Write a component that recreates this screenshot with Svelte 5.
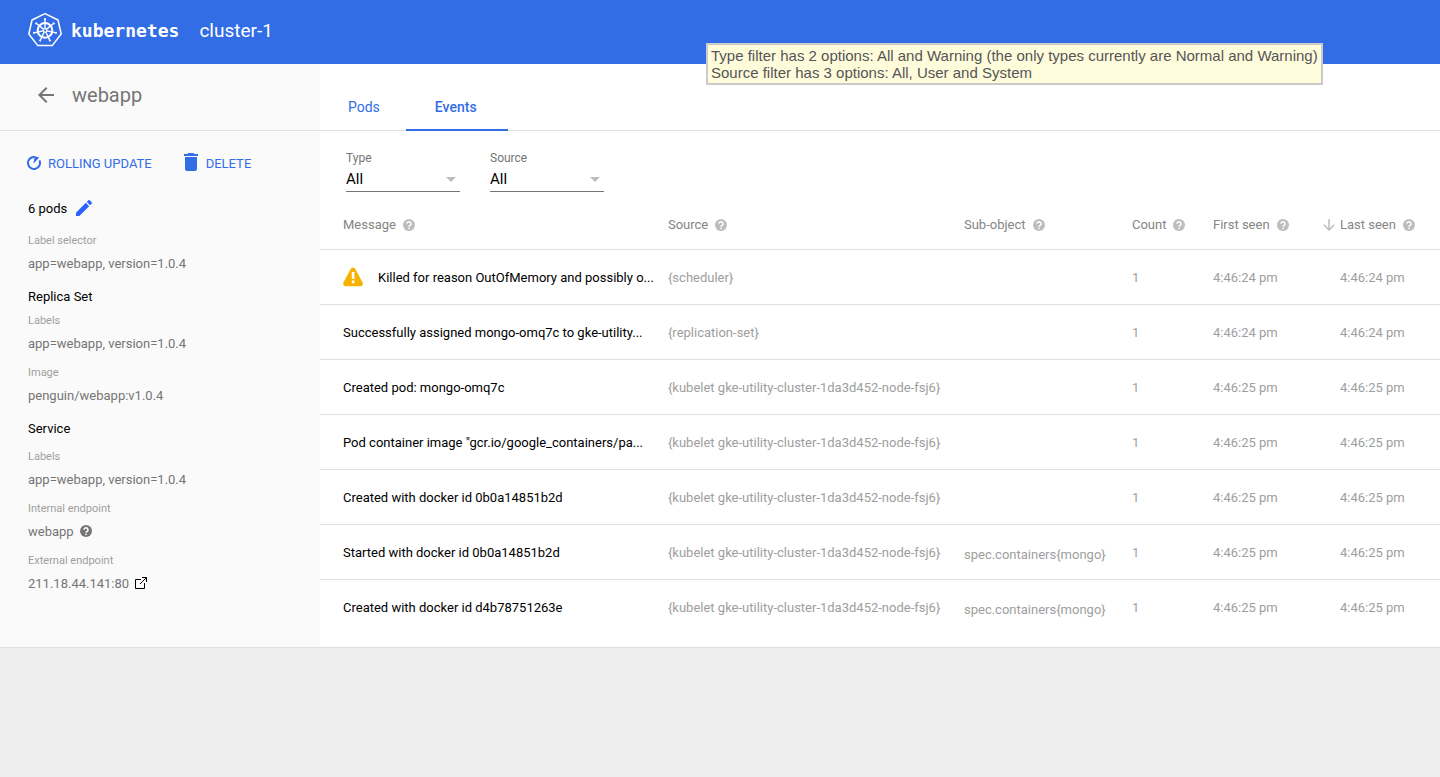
<script>
  const sections = [
    {
      title: '6 pods',
      lead: true,
      items: [{ label: 'Label selector', value: 'app=webapp, version=1.0.4' }]
    },
    {
      title: 'Replica Set',
      items: [
        { label: 'Labels', value: 'app=webapp, version=1.0.4' },
        { label: 'Image', value: 'penguin/webapp:v1.0.4' }
      ]
    },
    {
      title: 'Service',
      spaced: true,
      items: [
        { label: 'Labels', value: 'app=webapp, version=1.0.4' },
        { label: 'Internal endpoint', value: 'webapp', help: true },
        { label: 'External endpoint', value: '211.18.44.141:80', external: true }
      ]
    }
  ];

  const columns = [
    { key: 'message', title: 'Message' },
    { key: 'source', title: 'Source' },
    { key: 'object', title: 'Sub-object' },
    { key: 'count', title: 'Count' },
    { key: 'first', title: 'First seen' },
    { key: 'last', title: 'Last seen', sorted: true }
  ];

  const kubelet = '{kubelet gke-utility-cluster-1da3d452-node-fsj6}';
  const events = [
    { message: 'Killed for reason OutOfMemory and possibly o...', source: '{scheduler}', object: '', time: '4:46:24 pm', warning: true },
    { message: 'Successfully assigned mongo-omq7c to gke-utility...', source: '{replication-set}', object: '', time: '4:46:24 pm' },
    { message: 'Created pod: mongo-omq7c', source: kubelet, object: '', time: '4:46:25 pm' },
    { message: 'Pod container image "gcr.io/google_containers/pa...', source: kubelet, object: '', time: '4:46:25 pm' },
    { message: 'Created with docker id 0b0a14851b2d', source: kubelet, object: '', time: '4:46:25 pm' },
    { message: 'Started with docker id 0b0a14851b2d', source: kubelet, object: 'spec.containers{mongo}', time: '4:46:25 pm' },
    { message: 'Created with docker id d4b78751263e', source: kubelet, object: 'spec.containers{mongo}', time: '4:46:25 pm' }
  ];

  const spokes = [0, 1, 2, 3, 4, 5, 6].map((n) => (n * 360) / 7);
</script>

{#snippet helpIcon()}
  <svg class="help" viewBox="0 0 24 24" aria-hidden="true">
    <circle cx="12" cy="12" r="12" fill="currentColor" />
    <path d="M8 9.6a4 4 0 1 1 6.4 3.1c-1.4 1-2.3 1.5-2.3 3" fill="none" stroke="#fff" stroke-width="3" />
    <rect x="10.6" y="17.2" width="3" height="3" fill="#fff" />
  </svg>
{/snippet}

<header class="topbar">
  <svg class="logo" viewBox="0 0 36 36" aria-hidden="true" fill="none" stroke="#fff">
    <path d="M18 1.7 31 8l3.2 14-9 11.6H10.8L1.8 22 5 8z" stroke-width="1.5" stroke-linejoin="round" />
    <circle cx="18" cy="18.4" r="7.3" stroke-width="2" />
    <circle cx="18" cy="18.4" r="1.8" stroke-width="1.3" />
    {#each spokes as angle}
      <g transform="rotate({angle} 18 18.4)">
        <path d="M18 16.4V7" stroke-width="1.4" />
        <path d="M17 7h2" stroke-width="1.3" />
      </g>
    {/each}
  </svg>
  <span class="brand">kubernetes</span>
  <span class="cluster">cluster-1</span>
  <div class="note" role="note">
    Type filter has 2 options: All and Warning (the only types currently are Normal and Warning)<br />
    Source filter has 3 options: All, User and System
  </div>
</header>

<div class="page">
  <aside>
    <div class="title">
      <button class="back" aria-label="Back">
        <svg viewBox="0 0 24 24" fill="currentColor" aria-hidden="true"><path d="M20 11H7.83l5.59-5.59L12 4l-8 8 8 8 1.41-1.41L7.83 13H20v-2z" /></svg>
      </button>
      <h1>webapp</h1>
    </div>
    <div class="details">
      <div class="actions">
        <button class="action update">
          <svg width="14" height="14" viewBox="0 0 14 14" aria-hidden="true">
            <path d="M7.4 1A6 6 0 1 0 12.4 4.4" fill="none" stroke="currentColor" stroke-width="2" />
            <path d="M7 0 12.2 1.6 6.4 7.8 7.4 2z" fill="currentColor" />
          </svg>
          ROLLING UPDATE
        </button>
        <button class="action">
          <svg class="trash" width="14" height="18" viewBox="0 0 14 18" fill="currentColor" aria-hidden="true">
            <path d="M1 4h12v12a2 2 0 0 1-2 2H3a2 2 0 0 1-2-2zM14 1v2H0V1h3.5l1-1h5l1 1z" />
          </svg>
          DELETE
        </button>
      </div>
      {#each sections as section}
        <section class:lead={section.lead} class:spaced={section.spaced}>
          <h2>
            {section.title}
            {#if section.lead}
              <button class="edit" aria-label="Edit pod count">
                <svg viewBox="3 3 18 18" fill="currentColor" aria-hidden="true"><path d="M3 17.25V21h3.75L17.81 9.94l-3.75-3.75L3 17.25zM20.71 7.04a1 1 0 0 0 0-1.41l-2.34-2.34a1 1 0 0 0-1.41 0l-1.83 1.83 3.75 3.75 1.83-1.83z" /></svg>
              </button>
            {/if}
          </h2>
          <dl>
            {#each section.items as item}
              <dt>{item.label}</dt>
              <dd>
                {item.value}
                {#if item.help}{@render helpIcon()}{/if}
                {#if item.external}
                  <a class="open" href="#external" aria-label="Open external endpoint">
                    <svg viewBox="0 0 12 12" fill="none" stroke="currentColor" aria-hidden="true">
                      <path d="M6 2.5H.5v9h9V6" />
                      <path d="M7 .5h4.5V5M11.5.5 5 7" />
                    </svg>
                  </a>
                {/if}
              </dd>
            {/each}
          </dl>
        </section>
      {/each}
    </div>
  </aside>

  <main>
    <nav>
      <a href="#pods">Pods</a>
      <a href="#events" class="active" aria-current="page">Events</a>
    </nav>
    <form class="filters">
      {#each ['Type', 'Source'] as name}
        <div class="field">
          <label for="filter-{name}">{name}</label>
          <div class="pick">
            <select id="filter-{name}"><option>All</option></select>
            <svg viewBox="0 0 10 5" aria-hidden="true"><path d="M0 0h10L5 5z" fill="currentColor" /></svg>
          </div>
        </div>
      {/each}
    </form>
    <table>
      <colgroup>
        {#each columns as column}<col class="col-{column.key}" />{/each}
      </colgroup>
      <thead>
        <tr>
          {#each columns as column}
            <th scope="col" aria-sort={column.sorted ? 'descending' : undefined}>
              <div class="head">
                {#if column.sorted}
                  <svg class="sort" viewBox="0 0 12 12" fill="none" stroke="currentColor" stroke-width="1.5" aria-hidden="true"><path d="M6 0v11M.8 5.8 6 11l5.2-5.2" /></svg>
                {/if}
                {column.title}
                {@render helpIcon()}
              </div>
            </th>
          {/each}
        </tr>
      </thead>
      <tbody>
        {#each events as event}
          <tr>
            <td class="message">
              <div class="line">
                {#if event.warning}
                  <svg class="warn" viewBox="0 0 20 20" role="img" aria-label="Warning">
                    <path d="M10 3.5 17 16.5H3z" fill="#f7b200" stroke="#f7b200" stroke-width="5.6" stroke-linejoin="round" />
                    <path d="M8.8 5h2.6v7H8.8zM8.8 13.6h2.6v2.6H8.8z" fill="#fff" />
                  </svg>
                {/if}
                {event.message}
              </div>
            </td>
            <td>{event.source}</td>
            <td class="object">{event.object}</td>
            <td>1</td>
            <td>{event.time}</td>
            <td class="last">{event.time}</td>
          </tr>
        {/each}
      </tbody>
    </table>
  </main>
</div>

<style>
  :global(body) {
    margin: 0;
    background: #eee;
    font-family: Roboto, sans-serif;
    font-size: 13px;
  }
  button {
    padding: 0;
    border: 0;
    background: none;
    font: inherit;
    color: inherit;
    cursor: pointer;
  }
  svg {
    display: block;
    flex: none;
  }
  h1, h2, dl, dd {
    margin: 0;
    font-weight: 400;
  }

  .topbar {
    position: relative;
    display: flex;
    align-items: center;
    height: 64px;
    box-sizing: border-box;
    padding: 0 27px 4px;
    background: #326de6;
    color: #fff;
  }
  .logo {
    width: 36px;
    height: 36px;
  }
  .brand {
    margin-left: 8px;
    font: 700 18px "DejaVu Sans Mono", monospace;
  }
  .cluster {
    margin-left: 20px;
    font-size: 19px;
  }
  .note {
    position: absolute;
    top: 43px;
    left: 706px;
    padding: 2px 3px;
    border: 2px solid #cbcbcb;
    background: #fffcdc;
    color: #555;
    font: 15px/17px "Liberation Sans", Arial, sans-serif;
    white-space: nowrap;
  }

  .page {
    display: flex;
    border-bottom: 1px solid #dedede;
    background: #fff;
  }
  aside {
    flex: none;
    width: 320px;
    background: #fafafa;
  }
  .title {
    display: flex;
    align-items: center;
    gap: 14px;
    height: 67px;
    box-sizing: border-box;
    padding: 0 34px 4px;
    border-bottom: 1px solid #e0e0e0;
    color: #757575;
  }
  .back svg {
    width: 24px;
    height: 24px;
  }
  h1 {
    font-size: 20px;
  }
  .details {
    padding: 20px 27px 0 28px;
  }
  .actions {
    display: flex;
    gap: 32px;
    height: 24px;
    color: #326de6;
  }
  .action {
    display: flex;
    align-items: center;
    gap: 8px;
  }
  .update {
    gap: 7px;
    margin-left: -1px;
  }
  .trash {
    margin-bottom: 2px;
  }
  section {
    margin-top: 10px;
  }
  .lead {
    margin-top: 21px;
  }
  h2 {
    display: flex;
    align-items: center;
    gap: 9px;
    height: 24px;
    color: #000;
    font-size: 13px;
  }
  .lead h2 {
    margin-bottom: 8px;
  }
  .spaced h2 {
    margin-bottom: 4px;
  }
  .edit {
    color: #2962ff;
  }
  .edit svg {
    width: 16px;
    height: 16px;
  }
  dt {
    padding-top: 1px;
    color: #9e9e9e;
    font-size: 11px;
    line-height: 23px;
  }
  dd {
    display: flex;
    align-items: center;
    gap: 6px;
    height: 22px;
    margin-bottom: 6px;
    color: #757575;
  }
  .open {
    color: #000;
  }
  .open svg,
  .help {
    width: 12px;
    height: 12px;
  }

  main {
    flex: 1;
    min-width: 0;
    padding-bottom: 13px;
  }
  nav {
    display: flex;
    height: 66px;
    border-bottom: 1px solid #e0e0e0;
  }
  nav a {
    height: 65px;
    padding: 0 26px 0 28px;
    color: #326de6;
    font-size: 14px;
    line-height: 86px;
    text-decoration: none;
  }
  nav .active {
    padding: 0 31px 0 29px;
    border-bottom: 2px solid #326de6;
    font-weight: 500;
  }
  .filters {
    display: flex;
    gap: 30px;
    padding: 18px 26px 0;
  }
  .field {
    width: 114px;
  }
  label {
    display: block;
    color: #757575;
    font-size: 12px;
    line-height: 18px;
  }
  .pick {
    display: flex;
    align-items: center;
    height: 24px;
    border-bottom: 1px solid #757575;
    color: #bdbdbd;
  }
  select {
    flex: 1;
    min-width: 0;
    padding: 0;
    border: 0;
    appearance: none;
    background: none;
    color: #000;
    font: 15px/24px Roboto, sans-serif;
  }
  .pick svg {
    width: 10px;
    height: 5px;
    margin-right: 4px;
  }

  table {
    width: 100%;
    table-layout: fixed;
    border-collapse: separate;
    border-spacing: 0;
  }
  .col-message { width: 31.07%; }
  .col-source { width: 26.43%; }
  .col-object { width: 15%; }
  .col-count { width: 7.23%; }
  .col-first { width: 9.82%; }
  .col-last { width: 10.45%; }
  th,
  td {
    height: 54px;
    padding: 0;
    border-bottom: 1px solid #e0e0e0;
    color: #9e9e9e;
    font-weight: 400;
    text-align: left;
    white-space: nowrap;
  }
  th {
    height: 57px;
    color: #858585;
  }
  th:first-child,
  td:first-child {
    padding-left: 23px;
  }
  tbody tr:last-child td {
    border-bottom: 0;
  }
  .head {
    display: flex;
    align-items: center;
    gap: 7px;
    padding-top: 8px;
  }
  .head .help {
    color: #bdbdbd;
  }
  .sort {
    width: 12px;
    height: 12px;
    margin-right: -2px;
    color: #bdbdbd;
  }
  .message {
    color: #000;
  }
  .line {
    display: flex;
    align-items: center;
    gap: 15px;
  }
  .warn {
    width: 20px;
    height: 20px;
  }
  td.object {
    height: 50px;
    padding-top: 4px;
  }
  .last {
    padding-left: 17px;
  }
</style>
